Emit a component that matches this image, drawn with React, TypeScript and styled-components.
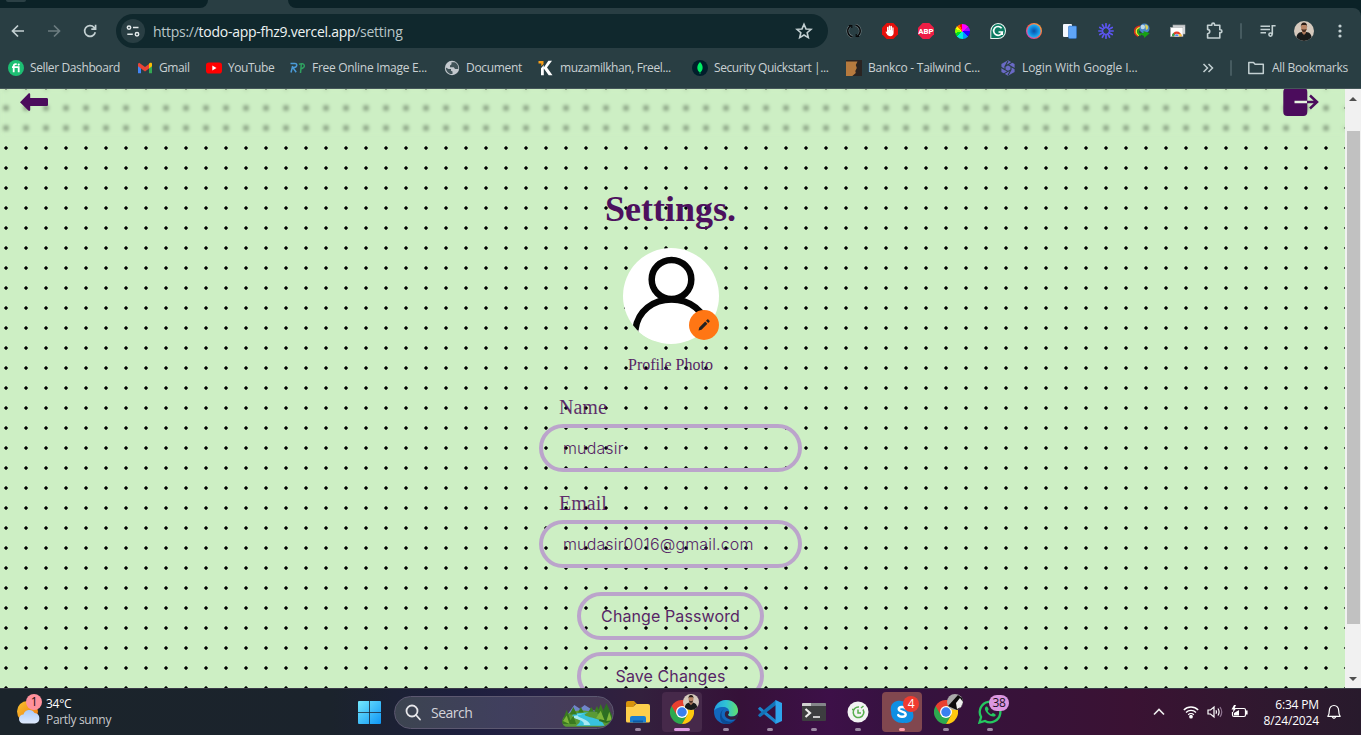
import React from "react";
import styled, { createGlobalStyle } from "styled-components";

const Global = createGlobalStyle`
  * { box-sizing: border-box; }
  html, body { margin: 0; padding: 0; overflow: hidden; }
  svg { display: block; flex: none; }
`;
const ui = `"Open Sans", "Noto Sans", sans-serif`;

const Screen = styled.div`
  width: 1361px; height: 735px; display: flex; flex-direction: column; overflow: hidden;
  font-family: ${ui}; background: #0b2227;
`;
const TabStrip = styled.div`
  height: 8px; display: flex; justify-content: space-between; background: #293e43; flex: none;
`;
const TabGap = styled.div<{ $w: number; $side: "left" | "right" }>`
  width: ${p => p.$w}px; height: 8px; background: #0b2227;
  border-bottom-${p => (p.$side === "left" ? "right" : "left")}-radius: 8px;
`;
const HoverTab = styled.div`
  width: 20px; height: 2px; margin-left: 6px; background: #2b4045; border-radius: 0 0 8px 8px;
`;
const Chrome = styled.div`
  height: 81px; flex: none; background: #293e43; border-top-right-radius: 8px; border-bottom: 1px solid #46575a;
`;
const Toolbar = styled.div`display: flex; align-items: center; height: 46px;`;
const Slot = styled.div<{ $w?: number }>`
  width: ${p => p.$w ?? 36}px; height: 36px; display: flex; align-items: center; justify-content: center; flex: none;
`;
const UrlBar = styled.div`
  width: 712px; height: 34px; margin: 0 8px; padding: 0 14px 0 5px; border-radius: 17px; background: #10282d;
  display: flex; align-items: center; flex: none;
`;
const SiteInfo = styled.div`
  width: 24px; height: 24px; border-radius: 50%; background: #293e43; display: flex; align-items: center; justify-content: center;
`;
const Url = styled.div`
  flex: 1; margin-left: 8px; font-size: 14px; line-height: 20px; letter-spacing: -0.27px; color: #b9c6c8; white-space: pre; padding-top: 1px;
  b { font-weight: 400; color: #edf3f3; }
`;
const Divider = styled.div`width: 2px; height: 16px; background: #465b60; border-radius: 1px;`;
const Face = styled.div<{ $s: number }>`
  width: ${p => p.$s}px; height: ${p => p.$s}px; border-radius: 50%; overflow: hidden; background: #d5c9bd;
`;
const Wheel = styled.div`
  width: 15px; height: 15px; border-radius: 50%;
  background: conic-gradient(#f0f 0 45deg, #a0f 45deg 90deg, #20f 90deg 135deg, #09f 135deg 180deg, #0ed 180deg 225deg, #0d2 225deg 260deg, #8f0 260deg 290deg, #ff0 290deg 315deg, #f60 315deg 335deg, #f00 335deg);
`;
const Bookmarks = styled.div`display: flex; align-items: center; height: 28px; padding-left: 8px;`;
const Bookmark = styled.div<{ $w: number; $ls: number }>`
  width: ${p => p.$w}px; display: flex; align-items: center; gap: 6px; flex: none; white-space: nowrap;
  font-size: 12px; line-height: 16px; letter-spacing: ${p => p.$ls}px; color: #c9d1d3;
`;

const Viewport = styled.div`height: 599px; flex: none; display: flex; overflow: hidden; background: #cdefc4;`;
const Page = styled.main`
  width: 1345px; height: 599px; overflow: hidden; color: #4b0c5c; font-family: "Liberation Serif", serif;
  background: radial-gradient(circle at 10px 10px, #000 1.4px, transparent 1.9px) -4px 9px / 20px 20px #cdefc4;
`;
const PageHeader = styled.header`
  height: 48px; padding: 0 26px 0 20px; display: flex; justify-content: space-between; align-items: flex-start;
  backdrop-filter: blur(2px);
`;
const Form = styled.form`display: flex; flex-direction: column; align-items: center; padding: 52px 4px 0 0;`;
const Title = styled.h1`margin: 0; font-size: 36px; line-height: 40px; font-weight: 700; opacity: 0.98;`;
const Avatar = styled.div`
  position: relative; width: 96px; height: 96px; margin: 19px 0 9px 1px; flex: none;
`;
const Photo = styled.svg`border-radius: 50%; background: #fff;`;
const EditBadge = styled.div`
  position: absolute; right: 0; bottom: 4px; width: 30px; height: 30px; border-radius: 50%; background: #ff7614;
  display: flex; align-items: center; justify-content: center;
`;
const Caption = styled.div`font-size: 16px; line-height: 24px; opacity: 0.9;`;
const Field = styled.label`width: 263px; height: 96px; display: flex; flex-direction: column; flex: none;`;
const Label = styled.span`font-size: 20px; line-height: 28px; padding: 0 20px; margin: 1px 0 3px; opacity: 0.85;`;
const Pill = styled.div<{ $w: number; $center?: boolean }>`
  width: ${p => p.$w}px; height: 48px; flex: none; border: 4px solid #bba4cb; border-radius: 24px;
  padding: 0 20px; display: flex; align-items: center; justify-content: ${p => (p.$center ? "center" : "flex-start")};
  font-family: Inter, sans-serif; font-size: 16px; font-weight: ${p => (p.$center ? 400 : 300)}; white-space: nowrap;
  letter-spacing: ${p => (p.$center ? 0.1 : 0.14)}px;
  span { opacity: 0.9; }
`;
const Fields = styled.div`padding-top: 15px;`;
const Actions = styled.div`display: flex; flex-direction: column; gap: 12px; padding-top: 8px;`;
const Scrollbar = styled.div`
  width: 16px; height: 599px; background: #f1f1f1; display: flex; flex-direction: column; align-items: center; justify-content: space-between;
  padding: 8px 0 7px;
`;
const Thumb = styled.div`width: 13px; height: 493px; background: #c1c1c1; margin: 30px 0 auto;`;

const Taskbar = styled.footer`
  height: 47px; flex: none; display: flex; border-top: 1px solid #3b3c48; color: #fff;
  background: linear-gradient(90deg, #1b242b 0, #1b232c 330px, #1d1f3d 460px, #252044 540px, #33203d 640px, #351138 740px, #3d1048 830px, #35123f 900px, #3a1233 1130px, #321730 1230px, #281a2c 1361px);
`;
const Weather = styled.div`width: 358px; display: flex; padding: 5px 0 0 16px; font-size: 12px; line-height: 16px;`;
const WeatherText = styled.div`margin: 2px 0 0 4px; letter-spacing: -0.25px; div + div { color: #c7c9cc; letter-spacing: -0.33px; }`;
const StartButton = styled.div`width: 36px; padding-top: 12px;`;
const Search = styled.div`
  width: 220px; height: 33px; margin: 7px 2px 0 0; border-radius: 17px; border: 1px solid #5c5870;
  background: linear-gradient(90deg, #3c4450, #403f5e 50%, #4a3b56); display: flex; align-items: center; padding-left: 10px;
  font-size: 14px; color: #d4d3da; overflow: hidden; letter-spacing: -0.5px;
  svg:last-child { margin-left: auto; margin-top: 3px; }
  span { margin-left: 9px; }
`;
const TaskApp = styled.div<{ $tile?: string; $mark?: string; $wide?: boolean }>`
  position: relative; width: 40px; height: 40px; margin: 3px 2px 0; border-radius: 4px; flex: none;
  background: ${p => p.$tile ?? "transparent"}; display: flex; flex-direction: column; align-items: center; padding-top: 8px;
  &::after {
    content: ""; width: ${p => (p.$wide ? 16 : 6)}px; height: 3px; border-radius: 2px; margin-top: 4px;
    background: ${p => p.$mark ?? "#9c8aa4"}; flex: none;
  }
`;
const Badge = styled.div<{ $l: number; $t: number; $w: number; $bg: string; $c: string }>`
  position: absolute; left: ${p => p.$l}px; top: ${p => p.$t}px; min-width: ${p => p.$w}px; height: 16px; border-radius: 8px;
  background: ${p => p.$bg}; color: ${p => p.$c}; font-size: 12px; line-height: 16px; text-align: center; letter-spacing: -0.4px;
`;
const MiniFace = styled.div`position: absolute; left: 21px; top: 2px;`;
const WeatherIcon = styled.div`position: relative; width: 26px; height: 36px;`;
const Tray = styled.div`display: flex; align-items: center; margin-left: auto; padding-right: 19px; height: 46px;`;
const TrayItem = styled.div<{ $w: number }>`width: ${p => p.$w}px; display: flex; justify-content: center; flex: none;`;
const Clock = styled.div`width: 63px; text-align: right; font-size: 12px; line-height: 16px; letter-spacing: -0.15px; margin: 1px 7px 0 0; white-space: nowrap;`;

const FaceArt = ({ s }: { s: number }) => (
  <Face $s={s}>
    <svg width={s} height={s} viewBox="0 0 20 20">
      <path d="M2 20c0-6 2-9 6-9h4c4 0 6 3 6 9z" fill="#191b1b" />
      <path d="M8 9h4v3l-2 2-2-2z" fill="#a87558" />
      <ellipse cx="10" cy="6.6" rx="3" ry="4" fill="#b98566" />
      <path d="M6.8 6c0-3 1-4.600 3.200-4.600S13.200 3 13.200 6l-.8-2H7.600z" fill="#2a1c16" />
      <path d="M7.400 8c.6 2.600 1.600 3 2.600 3s2-.4 2.600-3l-1.600.6h-2z" fill="#4a3025" />
    </svg>
  </Face>
);
const ChromeLogo = ({ s }: { s: number }) => (
  <svg width={s} height={s} viewBox="0 0 48 48">
    <path d="M24 24 3.200 12A24 24 0 0 0 24 48L34.400 30z" fill="#2da94f" />
    <path d="M24 12h20.800A24 24 0 0 1 24 48l10.400-18z" fill="#fdc90f" />
    <path d="M24 12h20.800A24 24 0 0 0 3.200 12L13.600 30z" fill="#e8402f" />
    <circle cx="24" cy="24" r="12" fill="#fff" />
    <circle cx="24" cy="24" r="9.500" fill="#397ff0" />
  </svg>
);
const stroke = { fill: "none", stroke: "#c3d0d2", strokeWidth: 1.7 };

const Extensions = () => (
  <>
    <Slot><svg width="16" height="16" viewBox="0 0 16 16" fill="none">
      <path d="M6.500 14A6.200 6.200 0 0 1 3.500 3.700M9.500 2a6.200 6.200 0 0 1 3 10.300" stroke="#6f7f83" strokeWidth="2.600" />
      <path d="M6.500 14A6.200 6.200 0 0 1 3.500 3.700L5 2.300M9.500 2a6.200 6.200 0 0 1 3 10.300L11 13.700" stroke="#08090a" strokeWidth="1.400" />
      <path d="M2.800 2.500h3v2.500M13.200 13.500h-3V11" stroke="#08090a" strokeWidth="1.100" />
    </svg></Slot>
    <Slot><svg width="16" height="16" viewBox="0 0 16 16">
      <path d="M4.700 0h6.600L16 4.700v6.600L11.300 16H4.700L0 11.300V4.700z" fill="#e60f0b" />
      <path d="M5 9V4.500a.7.7 0 0 1 1.400 0V7h.3V3.200a.7.7 0 0 1 1.500 0V7h.3V3.500a.7.7 0 0 1 1.500 0v4h.3V5a.6.6 0 0 1 1.300 0v5c0 2-1.300 3.200-3.200 3.200-2 0-2.800-.8-3.600-2.200L3.600 8.900c.4-.7 1-.4 1.400.1z" fill="#fff" />
    </svg></Slot>
    <Slot><svg width="16" height="16" viewBox="0 0 16 16">
      <path d="M4.700 0h6.600L16 4.700v6.600L11.300 16H4.700L0 11.300V4.700z" fill="#ed1e45" />
      <text x="8" y="10.900" textAnchor="middle" fontFamily="Roboto" fontWeight="800" fontSize="7.800" fill="#fff">ABP</text>
    </svg></Slot>
    <Slot><Wheel /></Slot>
    <Slot><svg width="16" height="16" viewBox="0 0 16 16">
      <path d="M8 0a8 8 0 1 1 0 16H.3V8A8 8 0 0 1 8 0z" fill="#e9f4f0" />
      <path d="M8 1a7 7 0 1 1 0 14H1.300V8A7 7 0 0 1 8 1z" fill="#0c7a62" />
      <path d="M11.600 5.300A4.400 4.400 0 1 0 12.300 9H8.500M12.200 8.300v3.600" fill="none" stroke="#fff" strokeWidth="1.700" />
    </svg></Slot>
    <Slot><svg width="16" height="16" viewBox="0 0 16 16">
      <defs><linearGradient id="ring" x1="0" y1="1" x2="1" y2="0"><stop stopColor="#c040e0" /><stop offset=".5" stopColor="#ff5a4a" /><stop offset="1" stopColor="#ffb43a" /></linearGradient>
        <radialGradient id="lens"><stop stopColor="#0f4fa0" /><stop offset=".5" stopColor="#0f7fd6" /><stop offset="1" stopColor="#28b3f0" /></radialGradient></defs>
      <circle cx="8" cy="8" r="8" fill="url(#ring)" /><circle cx="8" cy="8" r="6.700" fill="url(#lens)" />
    </svg></Slot>
    <Slot><svg width="14" height="16" viewBox="0 0 14 16">
      <rect x="0" y="1" width="9" height="13" rx="1" fill="#f4f8ff" /><rect x="5.500" y="3" width="8" height="12.500" rx="1" fill="#5fa5f7" stroke="#2d6fc4" strokeWidth=".6" />
    </svg></Slot>
    <Slot><svg width="16" height="16" viewBox="-8 -8 16 16">
      {Array.from({ length: 12 }, (_, i) => <path key={i} d="M0-3.400V-7.200" transform={`rotate(${i * 30})`} stroke="#5b55f0" strokeWidth="1.700" strokeLinecap="round" />)}
      <circle r="3.600" fill="none" stroke="#5b55f0" strokeWidth="1" />
    </svg></Slot>
    <Slot><svg width="16" height="16" viewBox="0 0 16 16">
      <path d="M7 3.300C-1 3.500-1 11 4 13.300" fill="none" stroke="#e52a18" strokeWidth="1.400" />
      <path d="M7 4.600C1 5 1 10.500 5 12.500" fill="none" stroke="#f4e12c" strokeWidth="1.500" />
      <path d="M7 6c-4 .5-4 4.500 0 6" fill="none" stroke="#1fa71f" strokeWidth="1.800" />
      <circle cx="10.500" cy="5.500" r="5" fill="#4a86c8" /><circle cx="8.800" cy="4" r="2.200" fill="#bcd9ea" /><path d="M11 1.500c4 0 4 5 1 5.500z" fill="#d9cf5a" />
      <path d="M4.500 10.500l5-.5V8l6.200 2.200L10 15v-2z" fill="#18a014" />
    </svg></Slot>
    <Slot><svg width="16" height="16" viewBox="0 0 16 16">
      <rect x="3" y="2" width="12" height="9" fill="#e9ecee" stroke="#a5a9ab" strokeWidth=".6" /><rect x="3" y="2" width="12" height="1.600" fill="#b9bcbe" />
      <rect x=".5" y="4.500" width="12.500" height="9" fill="#fff" stroke="#a5a9ab" strokeWidth=".6" />
      <path d="M2 13.300a4.800 4.800 0 0 1 9.600 0z" fill="#e33e2b" /><path d="M2 13.300a4.800 4.800 0 0 1 1.400-3.500l2 3.500z" fill="#2da94f" /><path d="M11.600 13.300a4.800 4.800 0 0 0-.6-2.300H8v2.300z" fill="#fcc934" /><path d="M4.600 13.300a2.200 2.200 0 0 1 4.400 0z" fill="#3a7ff0" stroke="#fff" strokeWidth=".5" />
    </svg></Slot>
    <Slot><svg width="18" height="18" viewBox="0 0 18 18" {...stroke} strokeWidth={1.600}>
      <path d="M2.600 3.200h4.200v-.7a1.400 1.400 0 0 1 2.800 0v.7h5.200v4.600h.7a1.400 1.400 0 0 1 0 2.800h-.7v5.400H2.600v-4.300c2.900-.5 2.900-3.900 0-4.300z" strokeLinejoin="round" />
    </svg></Slot>
    <Slot $w={18}><Divider /></Slot>
    <Slot><svg width="16" height="14" viewBox="0 0 16 14" {...stroke} strokeWidth={1.600}>
      <path d="M.5 2.200h9.500M.5 5.500h9.500M.5 8.800h5.500M12.300 10.500V1.800h3.300" /><circle cx="10.500" cy="10.600" r="1.600" />
    </svg></Slot>
    <Slot><FaceArt s={20} /></Slot>
    <Slot><svg width="4" height="16" viewBox="0 0 4 16" fill="#c3d0d2"><circle cx="2" cy="3" r="1.600" /><circle cx="2" cy="8" r="1.600" /><circle cx="2" cy="13" r="1.600" /></svg></Slot>
  </>
);

const marks: { t: string; w: number; ls: number; icon: React.ReactNode }[] = [
  { t: "Seller Dashboard", w: 129, ls: -0.38, icon: <svg width="16" height="16" viewBox="0 0 16 16"><circle cx="8" cy="8" r="8" fill="#1dbf73" /><path d="M5.700 12.200V6.200c0-1.400.6-2 2-2h1M4 7.200h6.700v5" fill="none" stroke="#fff" strokeWidth="1.800" /><circle cx="10.700" cy="4.600" r="1.100" fill="#fff" /></svg> },
  { t: "Gmail", w: 69, ls: -0.4, icon: <svg width="16" height="16" viewBox="0 0 16 16"><path d="M1 4.500v8.800h3V6.600z" fill="#4285f4" /><path d="M15 4.500v8.800h-3V6.600z" fill="#34a853" /><path d="M12 3.400 14 2.500l1 1v2.800l-3 2.300z" fill="#fbbc04" /><path d="M1 6.200V3.700l1.200-1 5.800 4.400 4-3.100v4.400l-4 3-4-3z" fill="#ea4335" /></svg> },
  { t: "YouTube", w: 84, ls: -0.45, icon: <svg width="16" height="16" viewBox="0 0 16 16"><rect y="2.500" width="16" height="11" rx="2.800" fill="#f00" /><path d="M6.300 5.600v4.800L10.500 8z" fill="#fff" /></svg> },
  { t: "Free Online Image E...", w: 154, ls: -0.29, icon: <svg width="16" height="16" viewBox="0 0 16 16" fill="none" strokeWidth="1.500"><path d="M.5 3.500h4.300c3 0 2.500 3.800-.8 4H2.800l3.400 4.800M2.700 6 1 12.500" stroke="#4b9bd8" /><path d="M9 4.200C14.500 2 17 7.500 10.500 9M11.300 4.500l-.8 8.500" stroke="#2fa060" /></svg> },
  { t: "Document", w: 94, ls: -0.33, icon: <svg width="16" height="16" viewBox="0 0 16 16"><circle cx="8" cy="8" r="7.200" fill="#c3c9ce" /><path d="M1.800 7.500 4.500 9H7v1.800l1.500.8v2.400c-4 .5-6.500-3-6.700-6.500zM7.500 2.300v2L6 5.500v1.700h3.800L11 9h3.300c.3-3-1-6-4-6.700z" fill="#293e43" opacity=".85" /></svg> },
  { t: "muzamilkhan, Freel...", w: 154, ls: -0.39, icon: <svg width="16" height="16" viewBox="0 0 16 16"><path d="M.5 1h5v3L3.300 6.200V3.500H.5z" fill="#f9a01b" /><path d="M3 8.200 5.800 5v10.300H3zM10.300.8H14L9 7.500l5.500 7.800h-3.800L5.500 8z" fill="#fff" /></svg> },
  { t: "Security Quickstart |...", w: 154, ls: -0.42, icon: <svg width="16" height="16" viewBox="0 0 16 16"><circle cx="8" cy="8" r="8" fill="#001e2b" /><path d="M8 2c4 4 3 8.500.3 10.200V14h-.6v-1.800C5 10.500 4 6 8 2z" fill="#00ed64" /></svg> },
  { t: "Bankco - Tailwind C...", w: 154, ls: -0.26, icon: <svg width="16" height="16" viewBox="0 0 16 16"><rect width="16" height="16" fill="#2a2422" /><path d="M0 1.500h11.500L9.800 5l1 3-1.500 3 .5 2-3.500 3H0z" fill="#b67a3e" /></svg> },
  { t: "Login With Google I...", w: 202, ls: -0.1, icon: <svg width="16" height="16" viewBox="0 0 16 16"><path d="M8 .3 14.600 4v8L8 15.700 1.400 12V4z" fill="#6a6ac6" /><path d="M8 4.700 11 6.400v3.300L8 11.400 5 9.700V6.400zM8 4.700 14 1M11 6.400 15.500 9M11 9.700l-3 5.500M8 11.400 2 15M5 9.700.5 7M5 6.400 8 1" fill="none" stroke="#293e43" strokeWidth="1.100" /></svg> },
];

export default function App() {
  return (
    <Screen>
      <Global />
      <TabStrip><TabGap $w={208} $side="left"><HoverTab /></TabGap><TabGap $w={1073} $side="right" /></TabStrip>
      <Chrome>
        <Toolbar>
          <Slot><svg width="14" height="14" viewBox="0 0 14 14" {...stroke}><path d="M13 7H1.800M7 1.500 1.500 7 7 12.500" /></svg></Slot>
          <Slot><svg width="14" height="14" viewBox="0 0 14 14" {...stroke} stroke="#6c7c80"><path d="M1 7h11.200M7 1.500 12.500 7 7 12.500" /></svg></Slot>
          <Slot><svg width="14" height="14" viewBox="0 0 14 14" {...stroke}><path d="M12.300 8.300A5.400 5.400 0 1 1 11 3.300l1.300 1.300M12.600.8v4.300H8.300" /></svg></Slot>
          <UrlBar>
            <SiteInfo><svg width="14" height="12" viewBox="0 0 14 12" {...stroke} stroke="#e2e9ea" strokeWidth={1.500}><circle cx="3" cy="2.600" r="1.700" /><path d="M7 2.600h5.500M1.300 9.200h5.500" /><circle cx="11" cy="9.200" r="1.700" /></svg></SiteInfo>
            <Url>https://<b>todo-app-fhz9.vercel.app</b>/setting</Url>
            <svg width="20" height="20" viewBox="0 0 24 24" {...stroke} strokeWidth={1.900}><path d="m12 3.900 2.400 5.600 6 .5-4.600 4 1.400 5.900-5.200-3.100-5.200 3.100L8.200 14l-4.600-4 6-.5z" /></svg>
          </UrlBar>
          <Extensions />
        </Toolbar>
        <Bookmarks>
          {marks.map(m => <Bookmark key={m.t} $w={m.w} $ls={m.ls}>{m.icon}{m.t}</Bookmark>)}
          <svg width="12" height="10" viewBox="0 0 12 10" {...stroke} strokeWidth={1.500}><path d="m1.500 1 4 4-4 4M6.500 1l4 4-4 4" /></svg>
          <Slot $w={33}><Divider /></Slot>
          <Bookmark $w={100} $ls={-0.32}><svg width="19" height="14" viewBox="0 0 19 14" {...stroke} strokeWidth={1.500}><path d="M1.800 1.500h4.700l1.600 1.700h8.200v9.300H1.800z" strokeLinejoin="round" /></svg>All Bookmarks</Bookmark>
        </Bookmarks>
      </Chrome>
      <Viewport>
        <Page>
          <PageHeader>
            <svg width="28" height="26" viewBox="0 0 28 26" fill="#4b0c5c"><path d="M0 13.200 8.300 4.700c.9-.8 1.900-.3 1.900.8V9H26.500c1 0 1.500.5 1.500 1.500v5c0 1-.5 1.500-1.500 1.500H10.200v3.800c0 1.100-1 1.600-1.900.8z" /></svg>
            <svg width="36" height="28" viewBox="0 0 36 28"><rect x=".3" y="-1" width="24" height="28" rx="4" fill="#4b0c5c" /><path d="M11.500 13H24" stroke="#e6f3e0" strokeWidth="2.500" /><path d="M24 13h10M27 6.500l7 6.500-7 6.500" fill="none" stroke="#4b0c5c" strokeWidth="2.500" /></svg>
          </PageHeader>
          <Form>
            <Title>Settings.</Title>
            <Avatar>
              <Photo width="96" height="96" viewBox="0 0 96 96">
                <g fill="none" stroke="#050505" strokeWidth="6.500"><ellipse cx="48.500" cy="31.500" rx="19.800" ry="19.600" /><path d="M12.500 84V81C15 63 30 51.500 48.500 51.500S82 63 85 81" /></g>
                <path d="M0 82.500h30V96H0z" fill="#fff" />
              </Photo>
              <EditBadge><svg width="12" height="12" viewBox="0 0 12 12" fill="#222"><path d="M.5 11.500l.8-3L7.200 2.600l2.200 2.200-5.900 5.900zM8 1.800 9.300.5c.3-.3.7-.3 1 0l1.200 1.200c.3.300.3.700 0 1L10.200 4z" /></svg></EditBadge>
            </Avatar>
            <Caption>Profile Photo</Caption>
            <Fields>
              <Field><Label>Name</Label><Pill $w={263}><span>mudasir</span></Pill></Field>
              <Field><Label>Email</Label><Pill $w={263}><span>mudasir0016@gmail.com</span></Pill></Field>
            </Fields>
            <Actions>
              <Pill $w={187} $center><span>Change Password</span></Pill>
              <Pill $w={187} $center><span>Save Changes</span></Pill>
            </Actions>
          </Form>
        </Page>
        <Scrollbar>
          <svg width="8" height="4" viewBox="0 0 8 4"><path d="M0 4 4 0l4 4z" fill="#505050" /></svg>
          <Thumb />
          <svg width="8" height="4" viewBox="0 0 8 4"><path d="M0 0l4 4 4-4z" fill="#505050" /></svg>
        </Scrollbar>
      </Viewport>
      <Taskbar>
        <Weather>
          <WeatherIcon>
            <svg width="26" height="36" viewBox="0 0 26 36">
              <defs><linearGradient id="sun" x1="0" y1="0" x2="1" y2="1"><stop stopColor="#f9c32d" /><stop offset="1" stopColor="#ee7412" /></linearGradient><linearGradient id="cloud" x1="0" y1="0" x2="0" y2="1"><stop stopColor="#a9c9fa" /><stop offset="1" stopColor="#dfeafc" /></linearGradient></defs>
              <circle cx="11.500" cy="17.500" r="10.500" fill="url(#sun)" />
              <path d="M7.500 29.500a4.500 4.500 0 0 1 0-9 6 6 0 0 1 11-1.500 5.300 5.300 0 0 1 .5 10.500z" fill="url(#cloud)" />
            </svg>
            <Badge $l={10} $t={0} $w={16} $bg="#ff919c" $c="#1d1010">1</Badge>
          </WeatherIcon>
          <WeatherText><div>34°C</div><div>Partly sunny</div></WeatherText>
        </Weather>
        <StartButton>
          <svg width="23" height="23" viewBox="0 0 23 23"><defs><linearGradient id="win" x1="0" y1="0" x2="1" y2="1"><stop stopColor="#74e8fd" /><stop offset="1" stopColor="#0f96f5" /></linearGradient></defs><path d="M0 1q0-1 1-1h10.200v11.200H0zM12 0h10q1 0 1 1v10.200H12zM0 12h11.200v11H1q-1 0-1-1zM12 12h11v10q0 1-1 1H12z" fill="url(#win)" /></svg>
        </StartButton>
        <Search>
          <svg width="17" height="17" viewBox="0 0 17 17" fill="none" stroke="#e6e6ea" strokeWidth="1.800"><circle cx="7" cy="7" r="5.500" /><path d="m11 11 4 4.500" strokeLinecap="round" /></svg>
          <span>Search</span>
          <svg width="51" height="25" viewBox="0 0 54 26">
            <path d="M5 14 13 3l6 4 5-4 8 5 10 3v8H6z" fill="#6f86c9" />
            <path d="M1 17c6-8 16-9 24-8s16 2 26 3l1 6q-2 8-12 8H4Q-1 24 1 17z" fill="#5a9a35" />
            <path d="M28 11c-8 0-18 1-17 3 2 3 8 3 8 6 0 2-3 4-4 5h30c-2-5-6-7-11-8-7-2-15-3-6-6z" fill="#38c2dd" />
            <path d="M24 12c-6 1-9 1-8 2 3 3 12 4 14 10h-7c2-6-12-6-12-9z" fill="#a7e9f3" />
            <path d="M0 21 5 8l4 11 3-5 3 9H1zM8 13l4-8 4 8zM37 12l4-10 4 10zM34 10l3-6 3 7zM17 11l3-6 3 6zM28 10l3-5 3 5z" fill="#3a7a20" />
            <path d="M40 18 47 1l6 13v6l-6 2-8-2z" fill="#2d6f22" /><path d="M36 17l5-8 4 10zM1 20l4-6 3 9zM47 20l3-10 3 9z" fill="#7db53a" />
          </svg>
        </Search>
        <TaskApp><svg width="24" height="24" viewBox="0 0 24 24"><path d="M0 3q0-2 2-2h6l3 3h-2l-2 4H0z" fill="#d6930c" /><path d="M0 7h7l3-3h12q2 0 2 2v15q0 1.500-1.500 1.500h-21Q0 22.500 0 21z" fill="#fdcf4c" /><path d="M4 22.500V18q0-2 2-2h12q2 0 2 2v4.500z" fill="#1a7fd0" /><path d="M7 22.500v-2h10v2z" fill="#0c5ba6" /></svg></TaskApp>
        <TaskApp $tile="#46294a" $mark="#dc9be0" $wide><ChromeLogo s={24} /><MiniFace><FaceArt s={16} /></MiniFace></TaskApp>
        <TaskApp><svg width="24" height="24" viewBox="0 0 24 24">
          <defs><linearGradient id="edge" x1="0" y1=".3" x2="1" y2=".3"><stop stopColor="#249fe0" /><stop offset=".5" stopColor="#2fc3d5" /><stop offset="1" stopColor="#62e06a" /></linearGradient></defs>
          <circle cx="12" cy="12" r="12" fill="#1267bd" />
          <path d="M.2 11C1 4.500 6 0 12 0c7 0 12 5 12 10.500 0 4-3 6-6 6-2.500 0-4-.8-4-1.800 0-.8 1.200-1.200 1.200-3C15.200 9 12.500 7 9 7 4.500 7 1 9 .2 11z" fill="url(#edge)" />
          <path d="M10 9c-4 3-3.500 11 4.500 12.500 3 .5 5.500-.5 7.500-2.500C20 22 16 24 12 24 5 24 4 12 10 9z" fill="#0b4a93" />
          <path d="M15.200 11.700c0 1.800-1.200 2.200-1.200 3 0 1 1.500 1.800 4 1.800 2.600 0 5-1.500 6-4 .1 2-.5 4.600-2 6.500-4 2-10 0-11-3.500-.7-3 1-6 4.200-3.800z" fill="#33203d" />
        </svg></TaskApp>
        <TaskApp><svg width="24" height="24" viewBox="0 0 24 24"><path d="M0 8.500 2 6.800 18 20v4L1 10z" fill="#1b86cf" /><path d="M0 15.500 2 17.200 18 5V0L1 14z" fill="#1273b8" /><path d="m17.500 0 6.500 3v18l-6.500 3z" fill="#2ea3ec" /></svg></TaskApp>
        <TaskApp><svg width="24" height="24" viewBox="0 0 24 24"><rect y="3" width="24" height="18" rx="1" fill="#3d3e40" /><path d="M0 6V4q0-1 1-1h8v3z" fill="#d0d0d0" /><path d="M9 3h14q1 0 1 1v2H9z" fill="#84868a" /><path d="m3.500 9 4.500 4-4.500 4" fill="none" stroke="#eee" strokeWidth="2.200" /><path d="M11 17h7" stroke="#eee" strokeWidth="1.600" /></svg></TaskApp>
        <TaskApp><svg width="24" height="24" viewBox="0 0 24 24"><circle cx="12" cy="12" r="10.500" fill="#f3f3f4" /><path d="M17 9.500A5.300 5.300 0 1 1 13 7M6 9.500h2M15 8l2.500-2M12 9.500V13h3" fill="none" stroke="#58ae4e" strokeWidth="1.500" /></svg></TaskApp>
        <TaskApp $tile="#81474f" $mark="#ff9aa6"><svg width="24" height="24" viewBox="0 0 24 24"><path d="M7 1c3-.8 4 .2 6 .2 6 .3 10 5 9.800 10 0 2 1 3 .5 6-.8 4-4.500 6.500-8.800 5.500-2 .6-7 .3-10-2.500C1.500 17.500 1 14.500 1.200 12 .8 10 .5 9 1 6.500 1.700 3.500 4 1.700 7 1z" fill="#0f8fe3" /><path d="M15.500 8.300c-1-1.800-6.800-2-6.800.8 0 3.300 7 1.800 7 5.300 0 3-6.500 3-7.500.6" fill="none" stroke="#fff" strokeWidth="2.400" strokeLinecap="round" /></svg><Badge $l={21} $t={4} $w={16} $bg="#f03b2f" $c="#fff">4</Badge></TaskApp>
        <TaskApp><ChromeLogo s={24} /><MiniFace><svg width="16" height="16" viewBox="0 0 16 16"><circle cx="8" cy="8" r="8" fill="#a9a9a9" /><path d="M1 12 11 1l4 3c2 5 0 10-5 12z" fill="#0c0c0c" /><path d="M9 9l4-5 3 4-2 5-4 2z" fill="#eee" /></svg></MiniFace></TaskApp>
        <TaskApp><svg width="24" height="24" viewBox="0 0 24 24" fill="none" stroke="#25c860"><path d="M1.500 22.500 3.100 17A10.300 10.300 0 1 1 7 20.900z" strokeWidth="2.300" /><path d="M8 6.500c-2 1.500-1 4.500 1.500 7s6 4.200 8 2.200c.8-1-.2-1.600-2.500-2.700-1 .3-1 1.500-2 1.200-1.500-.7-2.700-2-3.300-3.200.1-.8 1-.9.9-1.800-.8-2-1.200-3.100-2.600-2.700z" fill="#25c860" stroke="none" /></svg><Badge $l={19} $t={3} $w={20} $bg="#dc97e0" $c="#1d101d">38</Badge></TaskApp>
        <Tray>
          <TrayItem $w={32}><svg width="12" height="8" viewBox="0 0 12 8" fill="none" stroke="#eee" strokeWidth="1.600"><path d="m1 6.500 5-5 5 5" /></svg></TrayItem>
          <TrayItem $w={32}><svg width="16" height="14" viewBox="0 0 16 14" fill="none" stroke="#fff" strokeWidth="1.300"><path d="M.8 5a10.200 10.200 0 0 1 14.400 0M3 7.500a7 7 0 0 1 10 0M5.200 9.800a4 4 0 0 1 5.600 0" /><circle cx="8" cy="11.700" r="1.200" fill="#fff" /></svg></TrayItem>
          <TrayItem $w={16}><svg width="16" height="14" viewBox="0 0 16 14" fill="none" stroke="#fff" strokeWidth="1.200"><path d="M1 5h2.500L7 2v10L3.500 9H1z" /><path d="M9 5.200q1 1.800 0 3.600M11 3.500q2.200 3.500 0 7" /><path d="M13 2q3.500 5 0 10" stroke="#8f7590" /></svg></TrayItem>
          <TrayItem $w={33}><svg width="17" height="14" viewBox="0 0 17 14"><path d="M5 3.500h8q1.500 0 1.500 1.500v5q0 1.500-1.500 1.500H3q-1.500 0-1.500-1.500V7M15 6h1v3h-1z" fill="none" stroke="#fff" strokeWidth="1.200" /><path d="M3 10.500V8l5-3v5.500zM3 0 .5 4.500h2L1.500 8 5.500 3H3.700L5 0z" fill="#fff" /></svg></TrayItem>
          <Clock><div>6:34 PM</div><div>8/24/2024</div></Clock>
          <svg width="16" height="16" viewBox="0 0 16 16" fill="none" stroke="#fff" strokeWidth="1.200"><path d="M1.800 12.300h12.400c-1-1.300-1.500-2.500-1.500-5.500 0-3.300-2-5.300-4.700-5.300S3.300 3.500 3.300 6.800c0 3-.5 4.200-1.500 5.500zM6 12.500q2 3.600 4 0" strokeLinejoin="round" /></svg>
        </Tray>
      </Taskbar>
    </Screen>
  );
}
